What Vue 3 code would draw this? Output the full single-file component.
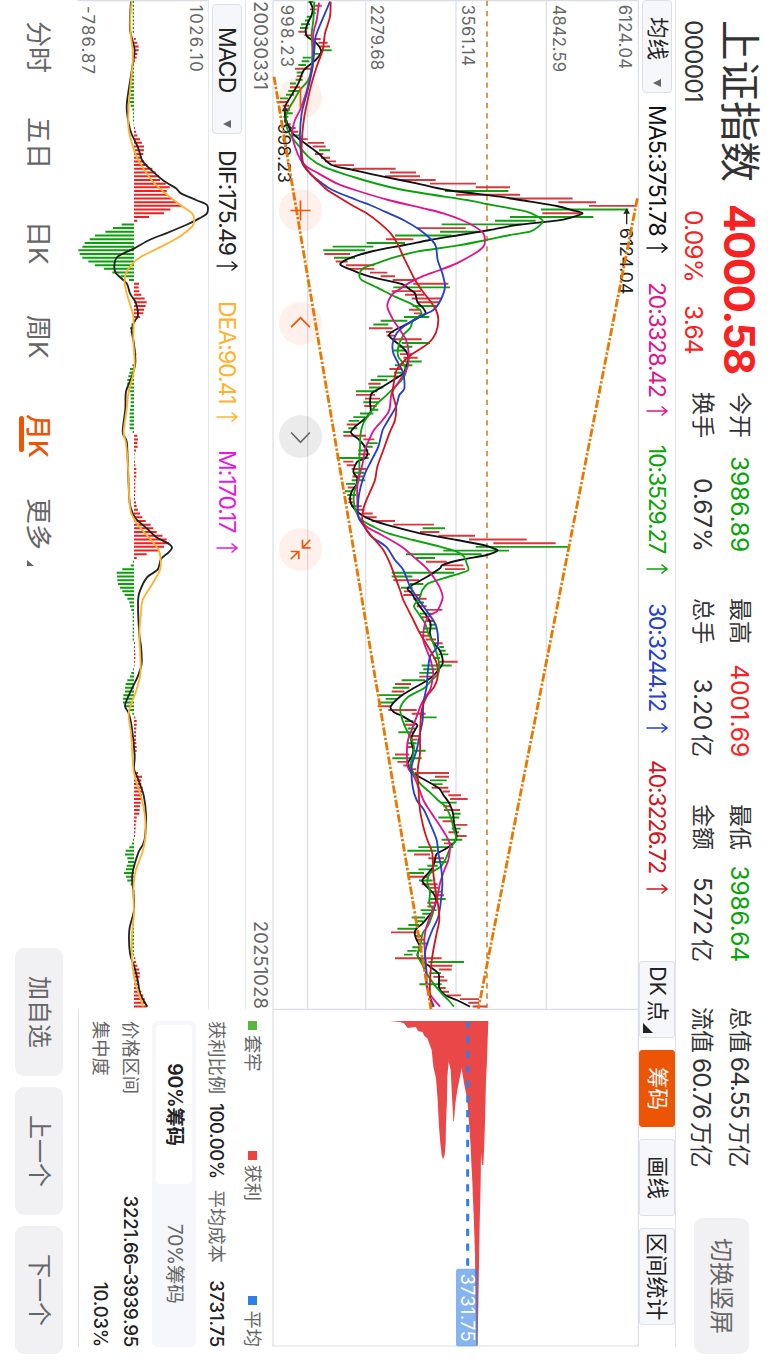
<script setup>
const quotes = [
    [
        { label: '今开', value: '3986.89', tone: 'down' },
        { label: '换手', value: '0.67%' }
    ],
    [
        { label: '最高', value: '4001.69', tone: 'up' },
        { label: '总手', value: '3.20', unit: '亿' }
    ],
    [
        { label: '最低', value: '3986.64', tone: 'down' },
        { label: '金额', value: '5272', unit: '亿' }
    ],
    [
        { label: '总值', value: '64.55', unit: '万亿' },
        { label: '流值', value: '60.76', unit: '万亿' }
    ]
]

const averages = [
    { key: 'ma5', text: 'MA5:3751.78' },
    { key: 'ma20', text: '20:3328.42' },
    { key: 'ma10', text: '10:3529.27' },
    { key: 'ma30', text: '30:3244.12' },
    { key: 'ma40', text: '40:3226.72' }
]

const macdValues = [
    { key: 'dif', text: 'DIF:175.49' },
    { key: 'dea', text: 'DEA:90.41' },
    { key: 'm', text: 'M:170.17' }
]

const periods = ['分时', '五日', '日K', '周K', '月K', '更多']
const pagers = ['加自选', '上一个', '下一个']

// chart units are thirds of a pixel, time runs along x, levels grow upwards
const TOP = 1107
const MACD_TOP = 626
const MACD_ZERO = 404
const STEP = 11.12

const barX = (i) => 6 + i * STEP

// monthly candles: r/g, low, high
const candles = `
g115-130 r135-155 r120-140 g125-137 g110-125 g105-120 g93-120 g90-115 r85-110 r103-125 r125-152 r145-173
r150-180 g150-185 g132-150 g98-125 g95-118 g85-108 r75-125 g80-100 r80-98 g77-98 g60-78 r60-90
g55-88 g48-72 g30-55 r20-55 r38-58 r38-60 g45-68 g40-55 r42-52 r48-62 r60-77 r68-85
g68-88 r85-113 r113-162 r128-167 g147-180 r135-160 r153-180 r165-198 r190-252 r248-377 r360-438 r345-450
r390-497 r480-618 r617-720 g525-715 r558-750 r717-908 r865-978 r957-1100 g813-1075 r817-938 g720-970 g675-797
g515-757 r440-587 g510-632 g375-545 r348-430 g290-405 g188-310 g160-285 r163-240 g192-255 r197-233 r228-313
r240-313 r300-352 r332-375 r368-440 r430-535 g370-540 r365-453 r405-463 r425-515 r440-507 g428-503 r417-453
r432-455 g402-478 g332-412 g310-355 r297-368 r348-372 r350-375 r370-455 g395-480 g385-427 g370-410 r390-427
r400-443 g405-455 g375-427 r358-397 g372-403 g322-385 g302-352 r295-332 g297-340 g258-322 r258-315 r285-330
g280-327 r283-320 g300-325 g270-310 g250-285 g236-268 r230-262 g235-262 g220-245 r220-288 r280-313 g290-323
g280-308 g265-295 r265-300 g200-296 r220-250 r230-255 r245-288 g250-283 r247-280 g245-285 g228-255 r233-258
g225-247 g232-258 r235-247 r235-250 r243-275 r255-283 r275-308 r285-320 r305-375 r370-492 g458-525 r450-508
r505-615 r597-770 r670-857 g617-897 g520-717 g408-635 g437-495 r468-530 r515-580 r525-585 g365-553 g365-427
r370-447 g420-460 g393-428 r402-432 r400-450 r430-470 g440-462 r440-470 r468-517 g450-490 r455-475 r470-493
g478-500 g462-500 g448-472 r455-480 r467-498 r490-518 g508-522 g508-527 g505-535 g490-510 r508-563 g455-545
g460-500 g448-490 r448-487 g395-465 r375-423 g368-418 r365-403 g327-395 g347-380 g330-370 r323-362 r355-440
r425-467 g455-500 g405-430 r400-435 g413-435 g385-430 r415-447 r420-443 g413-440 r410-430 g430-467 r375-418
g367-455 r382-412 r400-420 r415-438 r435-537 r495-537 g480-530 g488-518 r485-535 r518-540 r535-573 r540-593
g512-560 r520-540 r522-570 g548-572 g505-568 r518-555 r555-592 g545-572 r535-567 r558-590 g515-577 r522-545
g445-550 g412-500 r432-480 r475-522 g495-530 g472-503 g445-487 g413-462 r417-472 g447-488 r455-503 r475-505
g487-513 r495-522 g478-527 r472-495 r472-490 g452-500 g457-480 g425-465 g440-460 g415-447 g382-440 r363-440
r438-455 r440-465 g455-475 g427-458 g412-440 g402-428 r375-515 g475-582 r482-547 r507-545 g478-513 r490-522
r507-532 g448-515 r505-527 r515-537 r530-573 r570-627 r595-627 r608-650`
    .trim()
    .split(/\s+/)
    .map((item, i) => {
        const [low, high] = item.slice(1).split('-').map(Number)
        return { x: barX(i), low, high, up: item[0] === 'r' }
    })

const candlePath = (up) =>
    candles
        .filter((c) => c.up === up)
        .map((c) => `M${c.x.toFixed(1)} ${TOP - c.low}V${TOP - c.high}`)
        .join('')

// time,level pairs
const maLines = [
    {
        key: 'ma5',
        data: '5,120 25,128 45,125 65,115 90,107 110,112 130,140 150,153 160,152 180,137 210,102 250,85 290,62 320,45 345,45 370,52 400,68 430,105 460,145 495,185 510,250 530,340 550,440 570,530 590,690 600,750 618,860 630,905 640,938 652,905 662,860 675,740 690,660 705,570 720,480 735,405 753,310 772,245 785,218 795,212 810,245 830,300 852,395 865,415 880,435 900,440 910,445 925,460 940,467 950,450 970,415 990,375 1005,357 1020,370 1040,395 1060,412 1080,415 1100,408 1120,400 1140,370 1165,330 1180,305 1205,300 1225,302 1240,300 1260,280 1280,255 1298,243 1320,268 1340,285 1360,293 1375,285 1385,262 1415,250 1435,262 1455,258 1475,245 1500,240 1525,252 1545,275 1562,310 1580,370 1600,450 1620,560 1635,640 1645,670 1652,682 1665,650 1680,570 1695,518 1705,510 1725,480 1745,445 1765,413 1780,425 1800,437 1820,450 1840,465 1860,478 1875,482 1900,480 1925,488 1945,505 1965,515 1990,518 2010,505 2030,487 2045,465 2065,430 2090,390 2120,362 2135,370 2150,400 2165,425 2175,442 2190,435 2210,425 2230,425 2250,430 2270,425 2290,413 2305,418 2320,430 2340,465 2365,507 2385,520 2410,538 2440,549 2470,552 2490,557 2508,560 2525,555 2545,530 2562,500 2580,495 2605,487 2630,465 2643,457 2660,470 2680,490 2700,498 2730,490 2750,475 2770,458 2785,440 2800,434 2820,440 2840,450 2865,442 2880,452 2900,480 2920,505 2940,507 2965,508 2985,525 3000,560 3020,600'
    },
    {
        key: 'ma10',
        data: '5,133 60,130 100,125 150,127 200,125 240,115 270,90 300,72 340,50 370,48 400,58 430,80 470,115 500,160 540,280 570,400 600,590 612,650 623,710 635,770 648,800 663,818 680,805 695,780 705,720 720,650 737,560 755,440 773,370 790,320 805,280 825,268 840,275 862,320 890,375 915,430 940,455 960,430 985,420 1005,400 1040,385 1070,385 1090,400 1115,408 1140,395 1165,370 1190,345 1210,322 1240,300 1270,280 1300,272 1340,270 1380,268 1420,268 1450,262 1480,252 1510,252 1540,260 1560,275 1580,310 1600,355 1620,430 1640,510 1655,560 1670,582 1690,590 1710,595 1720,570 1735,520 1750,475 1770,457 1785,452 1800,445 1818,432 1840,445 1870,465 1900,475 1930,490 1960,500 1990,507 2020,505 2040,485 2065,462 2090,415 2120,392 2145,393 2180,405 2210,420 2240,432 2270,428 2300,420 2320,432 2350,450 2380,483 2400,503 2415,522 2435,535 2460,545 2490,552 2510,558 2525,555 2545,540 2570,530 2600,512 2620,480 2645,472 2675,480 2710,478 2730,490 2750,485 2775,475 2800,458 2830,452 2865,443 2890,455 2920,470 2950,490 2980,515 3000,535 3020,552'
    },
    {
        key: 'ma20',
        data: '8,147 60,140 100,130 150,130 200,127 240,118 280,108 330,90 360,75 400,66 440,75 480,92 500,110 520,145 550,200 570,255 600,355 625,460 640,520 660,575 680,615 700,640 722,645 740,640 760,615 790,560 810,510 830,455 850,415 870,385 885,365 920,352 960,370 990,390 1020,408 1050,415 1100,413 1140,390 1180,365 1230,358 1260,338 1290,312 1320,297 1350,285 1390,278 1420,270 1460,262 1500,262 1550,265 1580,290 1605,335 1640,395 1670,430 1700,465 1730,490 1760,508 1790,518 1810,513 1835,500 1845,480 1870,465 1920,460 1950,470 1980,482 2020,490 2040,487 2070,480 2110,455 2150,440 2190,425 2230,412 2300,413 2330,432 2360,445 2400,460 2430,478 2470,505 2510,530 2535,540 2580,535 2610,523 2650,510 2700,500 2750,480 2790,467 2820,463 2860,465 2920,470 2960,470 2990,485 3020,510'
    },
    {
        key: 'ma30',
        data: '5,180 40,165 80,148 110,137 150,133 200,128 250,118 300,105 340,95 400,90 450,92 490,97 520,120 545,150 570,187 600,260 615,300 635,345 660,400 690,450 720,485 740,498 780,503 820,517 860,525 900,512 930,490 950,450 980,400 1000,380 1030,368 1060,370 1090,385 1120,400 1165,403 1185,388 1220,378 1260,355 1290,338 1340,325 1380,305 1420,285 1460,272 1500,265 1550,265 1580,283 1610,305 1640,348 1680,375 1710,400 1760,420 1790,440 1830,468 1870,495 1900,503 1940,502 1970,480 2020,473 2060,470 2110,460 2160,458 2200,450 2250,440 2300,425 2360,428 2400,440 2430,462 2470,480 2520,500 2560,505 2600,513 2650,517 2700,513 2750,505 2790,487 2830,472 2860,465 2900,467 2950,470 2990,480 3020,492'
    },
    {
        key: 'ma40',
        data: '5,182 50,180 100,165 150,158 200,140 250,125 300,113 350,103 400,97 450,95 490,100 520,120 550,150 570,172 600,220 615,245 640,290 670,330 700,362 730,382 770,400 800,415 840,435 870,455 900,478 930,498 960,505 1000,497 1030,475 1060,430 1080,405 1110,380 1140,373 1180,368 1220,378 1260,375 1300,358 1350,340 1400,322 1440,315 1480,298 1520,282 1560,277 1590,290 1620,315 1650,340 1690,360 1730,375 1770,390 1800,400 1850,425 1900,450 1950,480 1990,500 2030,503 2060,493 2090,470 2130,455 2200,450 2260,450 2310,443 2360,445 2430,450 2480,460 2520,472 2560,487 2620,490 2680,498 2720,505 2760,508 2800,500 2850,490 2900,483 2950,480 2990,480 3020,488'
    }
]

const macdLines = [
    {
        key: 'dif',
        data: '5,395 50,392 90,392 115,398 150,406 180,402 220,396 270,388 320,382 370,388 400,396 440,415 480,428 500,445 540,490 565,530 580,545 600,590 615,623 640,623 655,600 675,560 700,500 720,450 745,405 770,355 795,345 820,350 850,382 880,392 905,408 930,415 950,415 965,405 990,397 1020,402 1049,406 1089,408 1129,398 1175,380 1227,378 1296,370 1324,382 1376,385 1456,388 1514,392 1554,408 1583,440 1611,470 1631,508 1643,518 1657,508 1677,485 1709,475 1732,443 1778,420 1812,416 1904,420 1938,425 1990,427 2030,415 2065,398 2116,377 2139,388 2179,397 2266,406 2306,404 2334,415 2386,433 2444,440 2512,437 2535,430 2558,417 2616,400 2650,399 2673,402 2731,404 2790,390 2860,392 2900,405 2940,415 2980,422 3000,432 3020,444'
    },
    {
        key: 'dea',
        data: '5,397 50,393 100,394 150,400 190,400 250,394 320,388 380,387 420,395 470,412 510,435 550,465 590,510 620,550 640,578 660,585 680,578 710,540 740,485 770,425 790,400 820,380 850,376 890,385 950,402 1020,402 1089,406 1130,400 1175,388 1227,382 1296,373 1330,380 1400,386 1500,390 1540,396 1580,420 1620,455 1650,478 1680,484 1710,482 1750,460 1800,430 1850,424 1904,420 1990,424 2030,422 2080,408 2139,388 2200,395 2306,402 2340,410 2400,428 2450,437 2512,438 2560,428 2616,408 2673,402 2740,404 2800,398 2850,397 2900,400 2950,408 3000,425 3020,432'
    }
]

const histogram = [
    -4, -4, -4, -4, -4, -4, -4, -4, -4, 0, 5, 10, 14, 14, 10, 8, 3, -3, -5, -5, -8, -8, -10, -10,
    -12, -10, -12, -12, -10, -5, -3, -3, -3, -1, 3, 6, 10, 18, 24, 30, 30, 28, 24, 30, 40, 55, 65, 75,
    78, 95, 107, 98, 100, 115, 130, 143, 109, 90, 45, 10, -37, -63, -86, -117, -133, -148, -155, -167, -163, -155, -137, -117,
    -90, -65, -40, -15, 15, 14, 16, 22, 32, 38, 35, 30, 28, 18, 6, -8, -12, -10, -6, -2, 2, 3, 4, 7,
    4, 1, -5, -12, -14, -17, -20, -20, -17, -13, -10, -10, -10, -10, -12, -13, -13, -13, -13, -13, -4, 10, 12, 10,
    11, 6, 2, 1, 3, 4, 7, 7, 7, 4, 4, 4, 4, 3, 3, 6, 8, 12, 18, 25, 35, 50, 58, 68,
    85, 98, 105, 90, 72, 38, 8, -3, -10, -35, -52, -51, -50, -48, -42, -35, -28, -20, -14, -12, -8, -4, -4, -4,
    -4, -4, -4, -4, -4, 3, 3, 3, 4, 4, 3, 2, -3, -8, -12, -20, -25, -27, -27, -32, -33, -33, -27, -15,
    -5, 4, 8, 8, 7, 6, 6, 6, 7, 8, 8, 4, 2, 1, 1, 3, 12, 24, 22, 22, 26, 24, 24, 22,
    20, 18, 17, 16, 8, 7, 5, 5, 4, 3, -3, -6, -14, -25, -27, -20, -18, -22, -24, -30, -24, -20, -10, -4,
    1, 1, 1, 1, 1, 1, 1, -2, -3, -5, -5, -5, -5, -6, -6, -5, -4, -3, 4, 6, 10, 16, 18, 17,
    12, 12, 15, 22, 28, 32, 36, 38
]

const histogramPath = (up) =>
    histogram
        .map((v, i) => (v !== 0 && v > 0 === up ? `M${barX(i).toFixed(1)} ${MACD_TOP - MACD_ZERO}v${-v}` : ''))
        .join('')

const chips =
    '3063,360 3066,390 3070,402 3084,413 3082,430 3080,437 3094,445 3096,458 3108,463 3115,472 3150,485 3200,490 3235,498 3300,503 3380,507 3430,511 3465,515 3478,519 3465,524 3430,527 3370,528 3300,531 3230,532 3184,536 3210,542 3290,546 3363,550 3363,552 3310,556 3270,562 3205,575 3250,582 3300,592 3380,598 3440,602 3490,604 3545,607 3600,609 3670,612 3765,615 3855,616 4037,619 4037,622 3920,625 3790,627 3670,629 3550,632 3458,633 3495,636 3495,640 3430,643 3365,645 3240,648 3180,651 3120,653 3063,655'

const parse = (data, top) =>
    data.split(' ').map((pair) => {
        const [t, v] = pair.split(',').map(Number)
        return [t, top - v]
    })

// catmull-rom spline through the points
const curve = (data, top) => {
    const p = parse(data, top)
    let d = `M${p[0]}`
    for (let i = 0; i < p.length - 1; i++) {
        const a = p[i - 1] || p[i]
        const b = p[i]
        const c = p[i + 1]
        const e = p[i + 2] || c
        const c1 = [b[0] + (c[0] - a[0]) / 7, b[1] + (c[1] - a[1]) / 7]
        const c2 = [c[0] - (e[0] - b[0]) / 7, c[1] - (e[1] - b[1]) / 7]
        d += `C${c1.map((n) => n.toFixed(1))} ${c2.map((n) => n.toFixed(1))} ${c}`
    }
    return d
}

const chipPoints = parse(chips, TOP).join(' ')

const gridLevels = [113, 287, 558, 829]
const priceLabels = [
    { text: '998.23', level: 50, width: 187 },
    { text: '2279.68', level: 322, width: 196 },
    { text: '3561.14', level: 595, width: 184 },
    { text: '4842.59', level: 866, width: 202 },
    { text: '6124.04', level: 1064, width: 193 }
]
</script>

<template>
    <div class="device">
        <div class="screen">
            <header class="header">
                <div class="stock">
                    <div class="stock-name">上证指数</div>
                    <div class="stock-code">000001</div>
                </div>
                <div class="price">
                    <div class="price-now">4000.58</div>
                    <div class="price-change"><span>0.09%</span><span>3.64</span></div>
                </div>
                <div v-for="(group, index) in quotes" :key="index" class="quote" :class="'quote-' + index">
                    <div v-for="item in group" :key="item.label" class="quote-row">
                        <span class="quote-label">{{ item.label }}</span>
                        <span class="quote-value" :class="item.tone">{{ item.value }}<i v-if="item.unit">{{ item.unit }}</i></span>
                    </div>
                </div>
                <button type="button" class="rotate-btn">切换竖屏</button>
            </header>

            <div class="indicator-bar">
                <button type="button" class="select ma-select">均线<i class="caret"></i></button>
                <span v-for="item in averages" :key="item.key" class="reading" :class="item.key">
                    <b>{{ item.text }}</b>
                    <svg class="arrow" viewBox="0 0 12 22"><path d="M6 21.5V1M1.5 6.5L6 1l4.500 5.500" /></svg>
                </span>
                <div class="tools">
                    <button type="button" class="tool dk">DK<span>点</span><i class="corner"></i></button>
                    <button type="button" class="tool active">筹码</button>
                    <button type="button" class="tool">画线</button>
                    <button type="button" class="tool wide">区间统计</button>
                </div>
            </div>

            <div class="kline">
                <svg class="kline-svg" viewBox="0 0 4041 1101">
                    <g class="grid">
                        <path d="M2 2V1098M3028 2V1098M2 1098H4038V2H2" />
                        <path v-for="level in gridLevels" :key="level" :d="`M2 ${TOP - level}H3028`" />
                    </g>
                    <g class="axis-text">
                        <text
                            v-for="label in priceLabels"
                            :key="label.text"
                            x="14"
                            :y="TOP - label.level + 18"
                            :textLength="label.width"
                        >{{ label.text }}</text>
                    </g>
                    <path class="last-price" d="M2 456H3020V463" />
                    <path class="bar up" :d="candlePath(true)" />
                    <path class="bar down" :d="candlePath(false)" />
                    <path
                        v-for="line in maLines"
                        :key="line.key"
                        class="line"
                        :class="line.key"
                        :d="curve(line.data, TOP)"
                    />
                    <g class="mark">
                        <path d="M632 37H673M325 1062H368" />
                        <path class="head" d="M625 37l16-10v20zM318 1062l16-10v20z" />
                        <text x="684" y="56" textLength="199">6124.04</text>
                        <text x="370" y="1082" textLength="179">998.23</text>
                    </g>
                    <path class="trend" d="M230 1095L3028 624M595 5L3026 482" />
                    <polygon class="chips" :points="chipPoints" />
                    <path class="avg-line" d="M3063 514H3800" />
                    <rect class="avg-tag" x="3806" y="483" width="233" height="66" rx="8" />
                    <text class="avg-text" x="3821" y="534" textLength="204">3731.75</text>
                </svg>
                <div class="chart-actions">
                    <button type="button"><svg viewBox="-64 -64 128 128"><path d="M-30 0H30" /></svg></button>
                    <button type="button"><svg viewBox="-64 -64 128 128"><path d="M-30 0H30M0-30V30" /></svg></button>
                    <button type="button"><svg viewBox="-64 -64 128 128"><path d="M11-28L-17 0L11 28" /></svg></button>
                    <button type="button" class="muted"><svg viewBox="-64 -64 128 128"><path d="M-12-28L17 0L-12 28" /></svg></button>
                    <button type="button">
                        <svg viewBox="-64 -64 128 128"><path d="M-29-29L-5-6M-29-6H-5V-30M29 29L6 6M6 29V5H29" /></svg>
                    </button>
                </div>
            </div>

            <div class="lower">
                <section class="macd">
                    <div class="dates"><span>20030331</span><span>20251028</span></div>
                    <div class="macd-bar">
                        <button type="button" class="select macd-select">MACD<i class="caret"></i></button>
                        <span v-for="item in macdValues" :key="item.key" class="reading" :class="item.key">
                            <b>{{ item.text }}</b>
                            <svg class="arrow" viewBox="0 0 12 22"><path d="M6 21.5V1M1.5 6.5L6 1l4.500 5.500" /></svg>
                        </span>
                    </div>
                    <svg class="macd-svg" viewBox="0 0 3027 393">
                        <path class="grid" d="M2 0V391" />
                        <g class="axis-text">
                            <text x="15" y="55" textLength="200">1026.10</text>
                            <text x="18" y="379" textLength="204">-786.87</text>
                        </g>
                        <path class="hist up" :d="histogramPath(true)" />
                        <path class="hist down" :d="histogramPath(false)" />
                        <path
                            v-for="line in macdLines"
                            :key="line.key"
                            class="line"
                            :class="line.key"
                            :d="curve(line.data, MACD_TOP)"
                        />
                    </svg>
                </section>

                <aside class="chip-panel">
                    <div class="legend">
                        <span><i class="dot locked"></i>套牢</span>
                        <span><i class="dot profit"></i>获利</span>
                        <span><i class="dot average"></i>平均</span>
                    </div>
                    <div class="chip-row ratio">
                        <span>获利比例</span><b>100.00%</b><span class="cost">平均成本</span><b class="cost-value">3731.75</b>
                    </div>
                    <div class="toggle">
                        <button type="button" class="on">90%筹码</button>
                        <button type="button">70%筹码</button>
                    </div>
                    <div class="chip-row range"><span>价格区间</span><b>3221.66–3939.95</b></div>
                    <div class="chip-row"><span>集中度</span><b>10.03%</b></div>
                </aside>
            </div>

            <footer class="footer">
                <nav class="periods">
                    <button
                        v-for="(name, index) in periods"
                        :key="name"
                        type="button"
                        :class="['period-' + index, { active: name === '月K' }]"
                    >{{ name }}<i v-if="name === '更多'" class="corner"></i></button>
                </nav>
                <div class="pagers">
                    <button v-for="name in pagers" :key="name" type="button">{{ name }}</button>
                </div>
            </footer>
        </div>
    </div>
</template>

<style>
body { margin: 0; background: #fff; }
</style>

<style scoped>
.device { width: 768px; height: 1366px; overflow: hidden; background: #fff; }
/* landscape screen held in a portrait window */
.screen { width: 1366px; height: 768px; display: flex; flex-direction: column; transform-origin: 0 0; transform: translateX(768px) rotate(90deg); color: #333; background: #fff; font-family: Inter, "Noto Sans CJK SC", sans-serif; font-size: 23px; line-height: 1; }
button { display: flex; align-items: center; justify-content: center; box-sizing: border-box; margin: 0; padding: 0; color: inherit; background: none; border: 0; font: inherit; white-space: nowrap; }
i { font-style: normal; }
b { font-weight: 400; }
svg { display: block; overflow: visible; }

.header { position: relative; flex: none; box-sizing: border-box; width: 1347px; height: 93px; display: flex; border-bottom: 1px solid #e3e5ea; white-space: nowrap; }
.stock { width: 185px; padding-left: 20px; }
.stock-name { height: 57px; font-size: 40.500px; line-height: 57px; }
.stock-code { font-size: 24.500px; line-height: 34px; letter-spacing: -.9px; }
.price { width: 187px; color: #f82222; }
.price-now { height: 57px; margin-left: -1px; font-size: 42px; font-weight: 700; line-height: 58px; letter-spacing: -1.500px; }
.price-change { display: flex; gap: 23px; padding-left: 5px; font-size: 24.500px; line-height: 34px; letter-spacing: -.8px; }
.quote { display: flex; flex-direction: column; gap: 1px; padding-top: 10px; }
.quote-row { display: flex; justify-content: space-between; line-height: 36px; }
.quote-label { font-size: 23px; }
.quote-value { font-size: 24.500px; letter-spacing: -.1px; }
.quote-value i { margin-left: 4px; font-size: 23px; }
.quote-0 { width: 160px; margin-right: 46px; }
.quote-1 { width: 159px; margin-right: 47px; }
.quote-2 { width: 158px; margin-right: 45px; }
.quote-3 { width: 160px; }
.quote-3 .quote-value { letter-spacing: -1.1px; }
.quote-3 .quote-value i { letter-spacing: -.5px; }
.quote-value.up { color: #f82222; }
.quote-value.down { color: #0aa30a; }
.rotate-btn { width: 136px; height: 55px; margin: 19px 0 0 auto; color: #666; background: #f1f1f3; border-radius: 9px; font-size: 24px; transform: translateX(7px); }

.indicator-bar { flex: none; width: 1347px; height: 36px; display: flex; align-items: center; }
.select { flex: none; justify-content: space-between; height: 30px; color: #222; background: #f6f7fa; border: 1px solid #dde0e8; border-radius: 4px; }
.caret { border: 4.500px solid transparent; border-top: 8px solid #666; border-bottom: 0; }
.ma-select { width: 93px; padding: 0 5px 0 16px; font-size: 21.500px; }
.reading { flex: none; display: flex; align-items: center; justify-content: space-between; white-space: nowrap; font-size: 23px; }
.reading.ma5 { width: 149px; margin-left: 12px; letter-spacing: -.9px; }
.reading.ma20 { width: 135px; margin-left: 28px; letter-spacing: -1.2px; }
.reading.ma10 { width: 130px; margin-left: 28px; letter-spacing: -1.2px; }
.reading.ma30 { width: 131px; margin-left: 28px; letter-spacing: -1.2px; }
.reading.ma40 { width: 135px; margin-left: 26px; letter-spacing: -1.2px; }
.arrow { flex: none; width: 12px; height: 22px; fill: none; stroke: currentColor; stroke-width: 1.5; }
.tools { display: flex; gap: 12px; margin-left: auto; margin-right: 22px; }
.tool { position: relative; width: 77px; height: 36px; color: #222; background: #f6f7fa; border: 1px solid #dde0e8; border-radius: 3px; font-size: 21.500px; }
.tool.dk { justify-content: flex-start; padding-left: 4px; }
.tool.dk span { margin-left: 4px; }
.tool.wide { width: 97px; font-size: 22px; }
.tool.active { color: #fff; background: #eb5504; border-color: #eb5504; }
.corner { border-left: 10px solid transparent; border-bottom: 10px solid #222; }
.tool .corner { position: absolute; right: 4px; bottom: 3px; }

.ma5 { color: #111; stroke: #111; }
.ma10 { color: #0aa30a; stroke: #0aa30a; }
.ma20 { color: #e0148c; stroke: #e0148c; }
.ma30 { color: #2440cc; stroke: #2440cc; }
.ma40 { color: #d2161e; stroke: #d2161e; }
.dif { color: #222; stroke: #222; }
.dea { color: #ffb22e; stroke: #ffb22e; }
.m { color: #e41ae4; }
.line { fill: none; stroke-width: 5.500; stroke-linejoin: round; }

.kline { position: relative; flex: none; height: 367px; }
.kline-svg { width: 1347px; height: 367px; }
.grid { fill: none; stroke: #dadde6; stroke-width: 3.500; }
.axis-text { fill: #666; font-size: 50px; }
.last-price { fill: none; stroke: #d89a58; stroke-width: 6; stroke-dasharray: 16 14.700; }
.bar { fill: none; stroke-width: 5.800; }
.bar.up { stroke: #d8383c; }
.bar.down { stroke: #12a012; }
.mark { fill: #222; font-size: 53px; }
.mark path { stroke: #222; stroke-width: 4; }
.mark .head { stroke: none; }
.trend { fill: none; stroke: #e97800; stroke-width: 8.500; stroke-dasharray: 25 6 7 6; }
.chips { fill: #ea4848; }
.avg-line { fill: none; stroke: #2f80e6; stroke-width: 9; stroke-dasharray: 22 22.500; }
.avg-tag { fill: #2f7de1; fill-opacity: .58; }
.avg-text { fill: #fff; font-size: 54px; }

.chart-actions { position: absolute; left: 76px; top: 317px; display: flex; gap: 70px; }
.chart-actions button { width: 43px; height: 43px; background: rgba(240, 90, 30, .09); border-radius: 50%; }
.chart-actions svg { width: 43px; height: 43px; fill: none; stroke: #f0560a; stroke-width: 5; }
.chart-actions .muted { background: rgba(0, 0, 0, .08); }
.chart-actions .muted svg { stroke: #666; }

.lower { flex: none; width: 1347px; height: 194px; display: flex; }
.macd { width: 1009px; }
.dates { box-sizing: border-box; height: 27px; display: flex; justify-content: space-between; padding: 0 0 0 1px; border-bottom: 1px solid #e6e7eb; color: #666; font-size: 18.500px; line-height: 23px; letter-spacing: .1px; }
.macd-bar { box-sizing: border-box; height: 37px; display: flex; align-items: center; border-bottom: 1px solid #e6e7eb; }
.macd-select { width: 130px; margin-left: 4px; padding: 0 5px 0 22px; font-size: 23px; letter-spacing: -1px; }
.reading.dif { width: 122px; margin-left: 16px; letter-spacing: -.9px; }
.reading.dea { width: 122px; margin-left: 29px; letter-spacing: -1px; }
.reading.m { width: 104px; margin-left: 27px; letter-spacing: -1px; }
.macd-svg { width: 1009px; height: 131px; }
.hist { fill: none; stroke-width: 6; }
.hist.up { stroke: #f01e1e; }
.hist.down { stroke: #0aa00a; }

.chip-panel { box-sizing: border-box; width: 338px; height: 194px; padding-left: 12px; border-bottom: 1px solid #dcdfe6; color: #666; font-size: 18.300px; white-space: nowrap; }
.legend { height: 38px; display: flex; line-height: 37px; }
.legend span { display: flex; align-items: center; font-size: 18.300px; }
.legend span:nth-child(2) { margin-left: 79px; }
.legend span:last-child { margin-left: auto; }
.dot { width: 9px; height: 9px; margin-right: 5px; }
.locked { background: #55b83c; }
.profit { background: #ea4444; }
.average { background: #2f80e6; }
.chip-row { display: flex; justify-content: space-between; line-height: 30px; }
.chip-row b { color: #222; font-size: 18.500px; font-weight: 500; letter-spacing: -.2px; }
.ratio { height: 38px; justify-content: flex-start; line-height: 34px; }
.ratio b { margin-left: 9px; letter-spacing: -.4px; }
.cost { margin-left: 11px; }
.ratio .cost-value { margin-left: auto; letter-spacing: -.2px; }
.toggle { box-sizing: border-box; height: 44px; display: flex; padding: 4px; background: #f6f7fa; border-radius: 6px; }
.toggle button { flex: 1; font-size: 19.500px; letter-spacing: -.3px; border-radius: 4px; }
.toggle .on { color: #222; background: #fff; font-weight: 600; }
.range { margin-top: 6px; }

.footer { flex: 1; display: flex; justify-content: space-between; align-items: center; padding-right: 12px; }
.periods { display: flex; padding-left: 21px; color: #666; font-size: 26px; }
.periods button { position: relative; justify-content: flex-start; box-sizing: border-box; height: 40px; padding-top: 2px; }
.period-0 { width: 96px; }
.period-1 { width: 104px; }
.period-2 { width: 94px; }
.period-3 { width: 99px; }
.period-4 { width: 84px; }
.period-5 { width: 68px; }
.periods .active { color: #eb5504; font-weight: 500; }
.periods .active::after { content: ""; position: absolute; left: 2px; bottom: 0; width: 36px; height: 5px; background: #eb5504; border-radius: 3px; }
.periods .corner { position: absolute; right: 0; bottom: 8px; border-width: 7px; border-left-width: 6px; border-bottom-color: #666; border-top: 0; border-right: 0; }
.pagers { display: flex; gap: 11px; }
.pagers button { width: 128px; height: 48px; color: #666; background: #f1f1f3; border-radius: 9px; font-size: 24px; }
</style>
